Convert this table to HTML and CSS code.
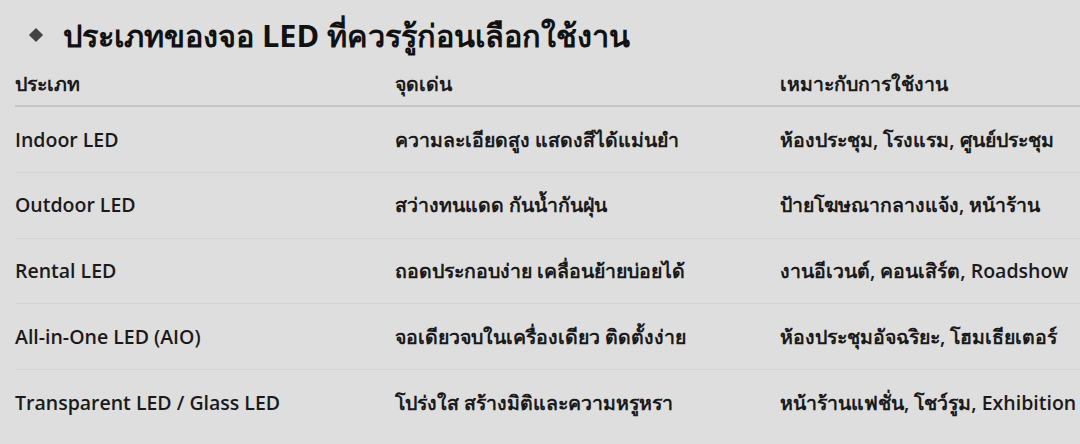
FILE: index.html
```html
<!DOCTYPE html>
<html lang="th">
<head>
<meta charset="utf-8">
<link rel="stylesheet" href="styles.css">
</head>
<body>
<section class="block">
  <h2 class="title"><span class="diamond"></span><span class="title-text">ประเภทของจอ LED ที่ควรรู้ก่อนเลือกใช้งาน</span></h2>
  <div class="table">
    <div class="row head">
      <div class="cell">ประเภท</div>
      <div class="cell">จุดเด่น</div>
      <div class="cell">เหมาะกับการใช้งาน</div>
    </div>
    <div class="row">
      <div class="cell name">Indoor LED</div>
      <div class="cell">ความละเอียดสูง แสดงสีได้แม่นยำ</div>
      <div class="cell">ห้องประชุม, โรงแรม, ศูนย์ประชุม</div>
    </div>
    <div class="row">
      <div class="cell name">Outdoor LED</div>
      <div class="cell">สว่างทนแดด กันน้ำกันฝุ่น</div>
      <div class="cell">ป้ายโฆษณากลางแจ้ง, หน้าร้าน</div>
    </div>
    <div class="row">
      <div class="cell name">Rental LED</div>
      <div class="cell">ถอดประกอบง่าย เคลื่อนย้ายบ่อยได้</div>
      <div class="cell">งานอีเวนต์, คอนเสิร์ต, Roadshow</div>
    </div>
    <div class="row">
      <div class="cell name">All-in-One LED (AIO)</div>
      <div class="cell">จอเดียวจบในเครื่องเดียว ติดตั้งง่าย</div>
      <div class="cell">ห้องประชุมอัจฉริยะ, โฮมเธียเตอร์</div>
    </div>
    <div class="row">
      <div class="cell name">Transparent LED / Glass LED</div>
      <div class="cell">โปร่งใส สร้างมิติและความหรูหรา</div>
      <div class="cell">หน้าร้านแฟชั่น, โชว์รูม, Exhibition</div>
    </div>
  </div>
</section>
</body>
</html>
```

FILE: styles.css
```css
html, body {
  margin: 0;
  padding: 0;
  background: #dedede;
}
body {
  font-family: "Open Sans", "Noto Sans", sans-serif;
  color: #1a1a1a;
  width: 1080px;
  height: 444px;
  overflow: hidden;
}
.block {
  padding-left: 15px;
}
.title {
  display: flex;
  align-items: center;
  margin: 0;
  height: 42px;
  padding-top: 14px;
  font-size: 30.7px;
  font-weight: 700;
  color: #111;
  line-height: 1;
}
.diamond {
  width: 10px;
  height: 10px;
  background: #444;
  transform: rotate(45deg);
  margin-left: 16px;
  margin-right: 22px;
  flex: none;
}
.table {
  margin-top: 7px;
}
.row {
  display: grid;
  grid-template-columns: 380px 385px 1fr;
  align-items: center;
  height: 64.75px;
  border-bottom: 1px solid #d2d2d2;
}
.row.head {
  height: 42px;
  border-bottom: 2px solid #c6c6c6;
}
.row:last-child {
  border-bottom: none;
}
.cell {
  font-size: 19.5px;
  font-weight: 600;
  white-space: nowrap;
  line-height: 1.2;
}
.head .cell {
  font-weight: 700;
}
```
